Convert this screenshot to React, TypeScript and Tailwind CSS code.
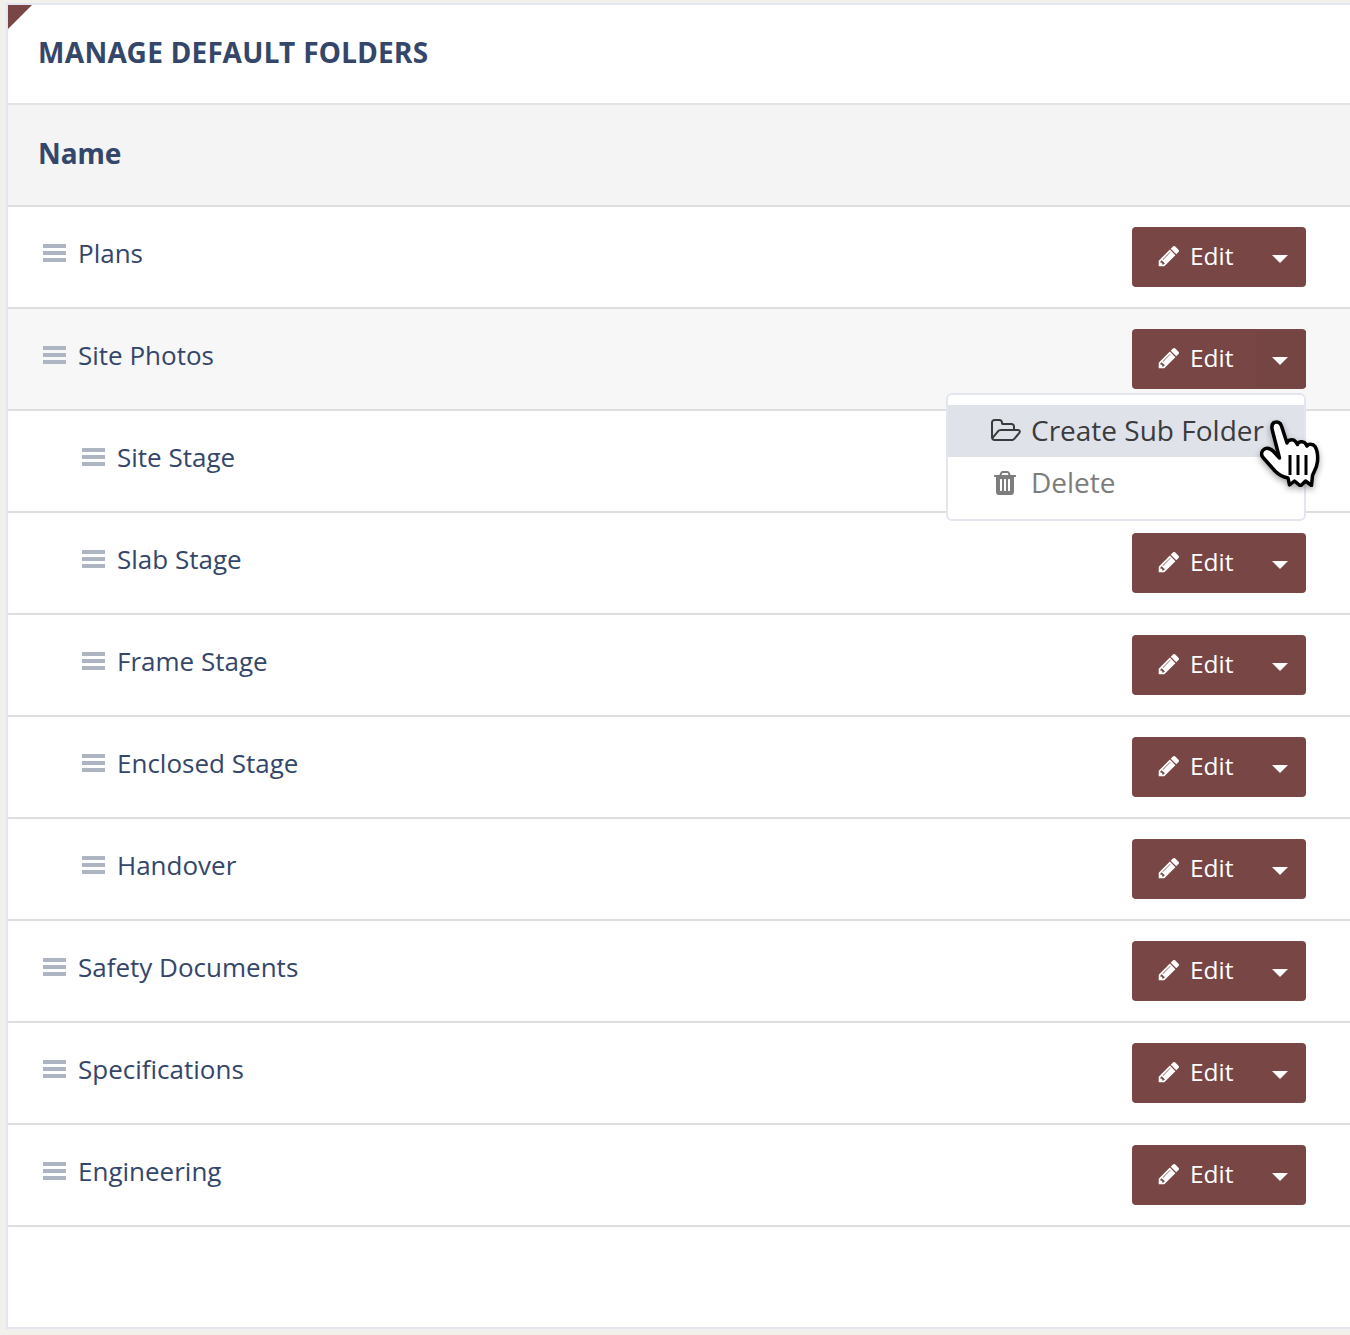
type Folder = { name: string; child?: boolean; active?: boolean }

const folders: Folder[] = [
  { name: 'Plans' },
  { name: 'Site Photos', active: true },
  { name: 'Site Stage', child: true },
  { name: 'Slab Stage', child: true },
  { name: 'Frame Stage', child: true },
  { name: 'Enclosed Stage', child: true },
  { name: 'Handover', child: true },
  { name: 'Safety Documents' },
  { name: 'Specifications' },
  { name: 'Engineering' },
]

const DragHandle = () => (
  <div className="flex flex-col gap-[3px] w-[23px] shrink-0">
    <span className="h-[4px] bg-[#aeb5c2]" />
    <span className="h-[4px] bg-[#aeb5c2]" />
    <span className="h-[4px] bg-[#aeb5c2]" />
  </div>
)

const PencilIcon = () => (
  <svg viewBox="0 0 1792 1792" className="w-[24px] h-[24px] shrink-0 -mt-[2px]" fill="currentColor">
    <path d="M491 1536l91-91-235-235-91 91v107h128v128h107zm523-928q0-22-22-22-10 0-17 7l-542 542q-7 7-7 17 0 22 22 22 10 0 17-7l542-542q7-7 7-17zm-54-192l416 416-832 832h-416v-416zm683 96q0 53-37 90l-166 166-416-416 165-166q36-38 90-38 53 0 91 38l235 234q37 39 37 91z" />
  </svg>
)

const TrashIcon = () => (
  <svg viewBox="0 0 1792 1792" className="w-[28px] h-[28px] shrink-0" fill="currentColor">
    <path d="M704 1376v-704q0-14-9-23t-23-9h-64q-14 0-23 9t-9 23v704q0 14 9 23t23 9h64q14 0 23-9t9-23zm256 0v-704q0-14-9-23t-23-9h-64q-14 0-23 9t-9 23v704q0 14 9 23t23 9h64q14 0 23-9t9-23zm256 0v-704q0-14-9-23t-23-9h-64q-14 0-23 9t-9 23v704q0 14 9 23t23 9h64q14 0 23-9t9-23zm-544-992h448l-48-117q-7-9-17-11h-317q-10 2-17 11zm928 32v64q0 14-9 23t-23 9h-96v948q0 83-47 143.500t-113 60.500h-832q-66 0-113-58.500t-47-141.500v-952h-96q-14 0-23-9t-9-23v-64q0-14 9-23t23-9h309l70-167q15-37 54-63t79-26h320q40 0 79 26t54 63l70 167h309q14 0 23 9t9 23z" />
  </svg>
)

const FolderOpenIcon = () => (
  <svg viewBox="0 0 1984 1792" className="w-[31px] h-[28px] shrink-0" fill="currentColor">
    <path d="M1845 931q0-35-53-35h-1088q-40 0-85.500 21.500t-71.500 52.500l-294 363q-18 24-18 40 0 35 53 35h1088q40 0 86-22t71-53l294-363q18-22 18-39zm-1141-163h768v-160q0-40-28-68t-68-28h-576q-40 0-68-28t-28-68v-64q0-40-28-68t-68-28h-320q-40 0-68 28t-28 68v853l256-315q44-53 116-87.500t140-34.500zm1269 163q0 62-46 120l-295 363q-43 53-116 87.500t-140 34.500h-1088q-92 0-158-66t-66-158v-960q0-92 66-158t158-66h320q92 0 158 66t66 158v32h544q92 0 158 66t66 158v160h192q54 0 99 24.500t67 70.500q15 32 15 68z" />
  </svg>
)

const EditButton = ({ active }: { active?: boolean }) => (
  <div className="flex h-[60px] w-[174px] rounded-[4px] bg-[#784644] text-white shrink-0">
    <div className="flex items-center gap-[9px] pl-[25px] w-[124px]">
      <PencilIcon />
      <span className="text-[24.5px] leading-none pb-[1px]">Edit</span>
    </div>
    <div className="flex flex-1 pt-[2px] pb-[2px]">
      <div className={`flex flex-1 items-center justify-center pt-[4px] ${active ? 'bg-[#754543]' : ''}`}>
        <span className="-ml-[2px] w-0 h-0 border-x-[8px] border-x-transparent border-t-[8px] border-t-white" />
      </div>
    </div>
  </div>
)

const HandCursor = () => (
  <svg viewBox="0 0 62 68" className="absolute left-[1260px] top-[419px] w-[62px] h-[68px] drop-shadow-[0_3px_3px_rgba(0,0,0,0.35)]">
    <path
      d="M14 3.500c3-1.500 6.500 0 7.500 3.500l5.500 17c.5-3 6-4.500 8.500-1.500l2 3c.5-3 6-4 8-1l1.500 2.500c1-2.500 6-2.500 8 .5 2.500 4 3 9 2.500 15-.5 6-3.500 10-5 14l-1 10-6-4.500-5 5-6-5-5 4-1.500-7c-5-1-9-3-13-7L3 38.500c-2.500-3-1.500-7 1.500-8.500 3-1.500 6.500 0 9 2.500l6 6.500L12.500 12c-1-3.500-.5-7 1.500-8.500z"
      fill="#fff"
      stroke="#000"
      strokeWidth="3.500"
      strokeLinejoin="round"
    />
    <path d="M30 36v20M38 36v20M46 36v20" stroke="#000" strokeWidth="3" fill="none" />
  </svg>
)

const App = () => {
  return (
    <div className="relative h-[1335px] w-[1350px] overflow-hidden bg-[#f1f0eb] pt-[3px] pl-[6px] font-['Open_Sans',sans-serif] text-[#34466a]">
      <div className="relative h-[1326px] border-l-2 border-t-2 border-b-2 border-[#e3e6f0] bg-white">
        <svg viewBox="0 0 24 24" className="absolute left-0 top-0 w-[24px] h-[24px]">
          <polygon points="0,0 24,0 0,24" fill="#784644" />
        </svg>
        <div className="flex h-[100px] items-center border-b-2 border-[#e3e3e3] pl-[30px] pb-[4px]">
          <h2 className="font-['Noto_Sans',sans-serif] text-[28px] font-bold leading-none tracking-[0.3px]">MANAGE DEFAULT FOLDERS</h2>
        </div>
        <div className="flex h-[102px] items-center border-b-2 border-[#dedede] bg-[#f4f4f4] pl-[30px] pb-[4px]">
          <span className="font-['Noto_Sans',sans-serif] text-[28px] font-bold leading-none">Name</span>
        </div>
        {folders.map((f) => (
          <div
            key={f.name}
            className={`flex h-[102px] items-center justify-between border-b-2 border-[#dedede] pr-[44px] ${f.active ? 'bg-[#f7f7f7]' : ''}`}
          >
            <div className={`flex items-center gap-[12px] pb-[8px] ${f.child ? 'pl-[74px]' : 'pl-[35px]'}`}>
              <DragHandle />
              <span className="text-[26px] leading-none pb-[1px]">{f.name}</span>
            </div>
            <EditButton active={f.active} />
          </div>
        ))}
      </div>

      <div className="absolute left-[946px] top-[393px] h-[128px] w-[360px] rounded-[6px] border-2 border-[#e3e6f0] bg-white pt-[10px] text-[28px]">
        <div className="flex h-[52px] items-center bg-[#e0e2e9] pl-[42px] text-[#3a3b3e]">
          <span className="mr-[10px]"><FolderOpenIcon /></span>
          <span className="leading-none pb-[2px]">Create Sub Folder</span>
        </div>
        <div className="flex h-[52px] items-center pl-[43px] text-[#7d7d7d]">
          <span className="mr-[12px]"><TrashIcon /></span>
          <span className="leading-none pb-[2px]">Delete</span>
        </div>
      </div>
      <HandCursor />
    </div>
  )
}

export default App
